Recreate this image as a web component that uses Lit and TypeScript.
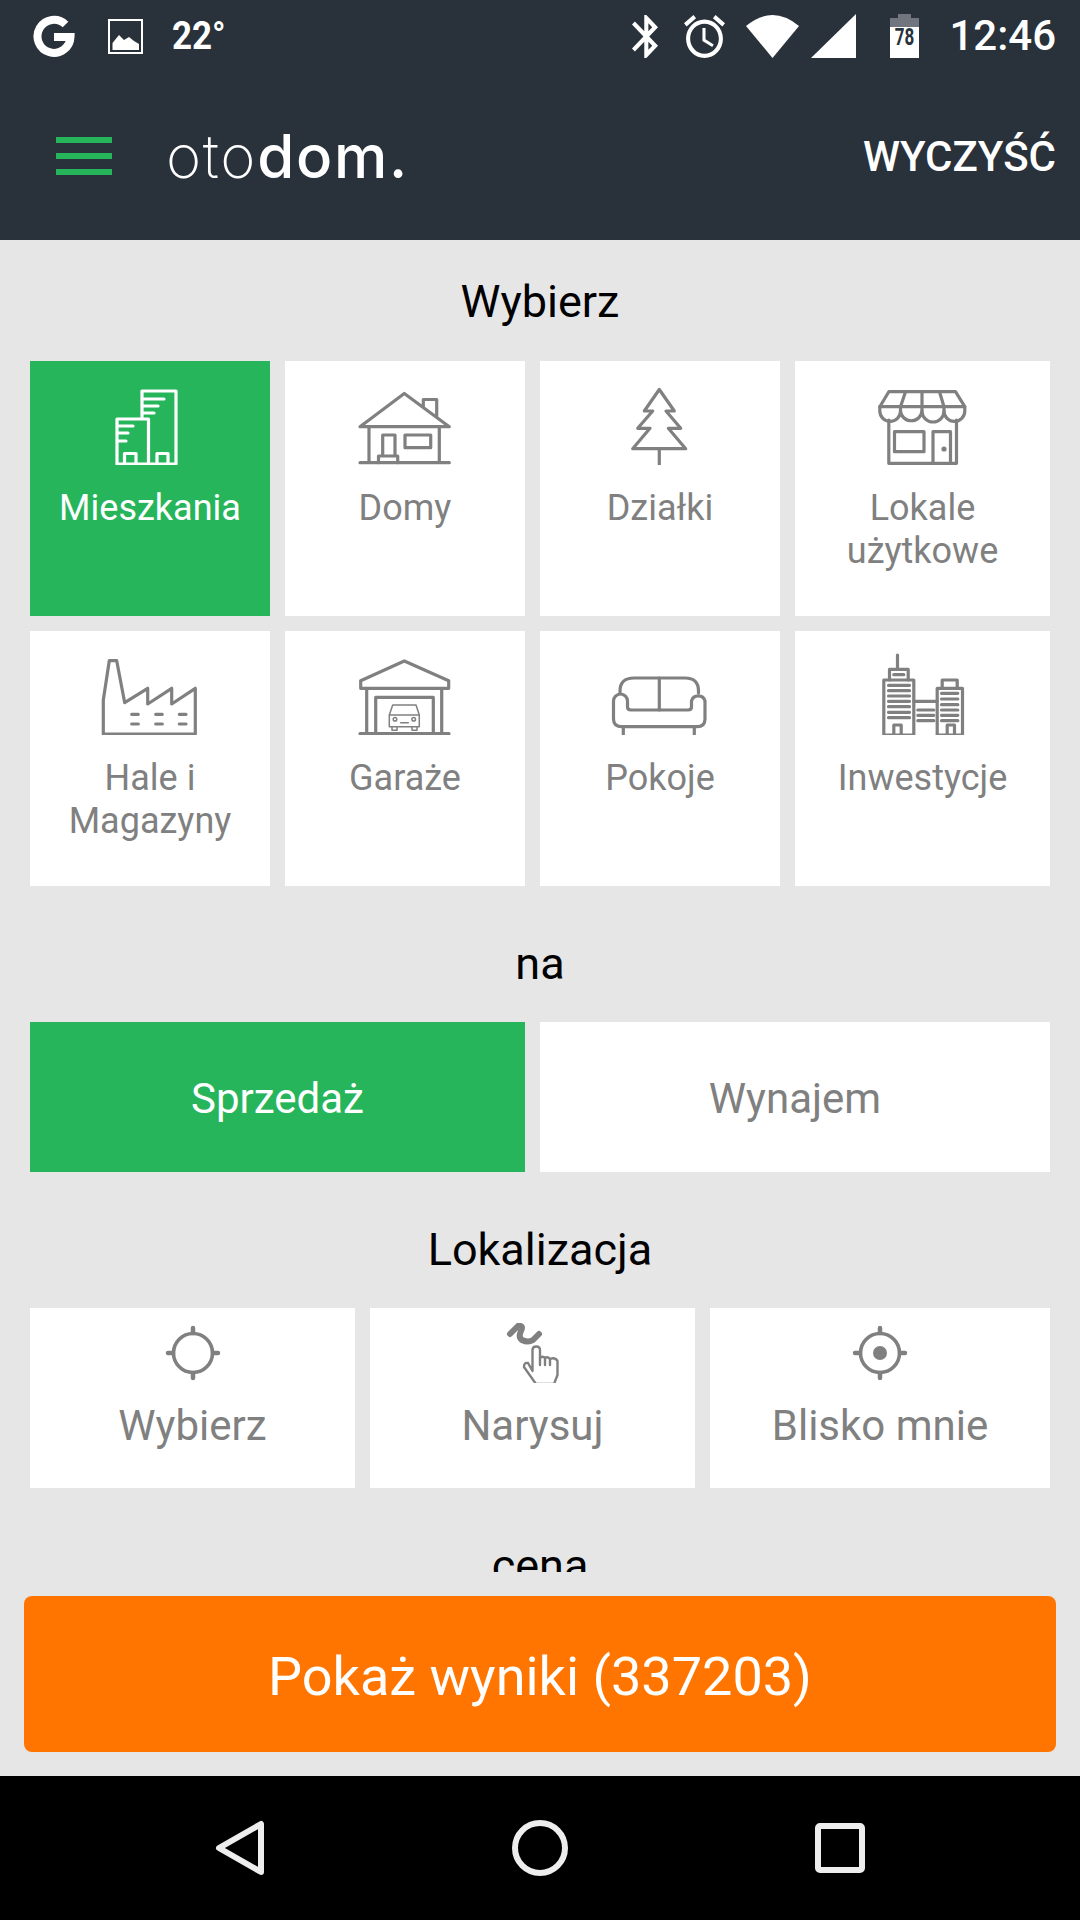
import { LitElement, html, svg, css } from 'lit';
import { customElement } from 'lit/decorators.js';
import { classMap } from 'lit/directives/class-map.js';

// all property icons share a 100x90 box, drawn as 3px outlines
const icons = {
  flats: svg`
    <path d="M42 43V16H76V89H17V44H48.5V89" />
    <path d="M43 24H64M43 31H58M43 38H54M18 51H33M18 58H28M18 66H26" />
    <path d="M24.5 89V78.5H36V89M57 89V78.5H68V89" />`,
  house: svg`
    <path d="M5 51.7L49.3 18.5L94.3 51.7ZM68.3 32V24.5H81.7V41.5" />
    <path d="M14 52V87.7M84.3 52V87.7M5 87.7H94.3" />
    <path d="M27.7 81V60H40V81M23.5 87.7V81H42.7V87.7" />
    <rect x="50" y="60" width="25.7" height="12.7" />`,
  tree: svg`
    <path d="M49.3 14.5L64.3 36H56L70.7 53.3H58.3L75.7 73.7H22.7L40 53.3H27.7L42.7 36H34.3Z" />
    <path d="M49.3 73.7V89.3" />`,
  shop: svg`
    <path d="M15.8 16.7H82.5L91.8 31.7H6.8Z" />
    <path d="M6.8 31.7V36A10.3 10.3 0 0 0 27.5 36A10.8 10.8 0 0 0 49 36A11 11 0 0 0 71 36A10.4 10.4 0 0 0 91.8 36V31.7" />
    <path d="M32.5 16.7L27.5 31.7V36M49 16.7V36M66.5 16.7L71 31.7V36" />
    <path d="M15.8 45V88.3H83.5V45" />
    <rect x="21.5" y="56.7" width="29.5" height="20" />
    <path d="M60 88.3V56.7H77.5V88.3" />
    <circle class="solid" cx="71" cy="74" r="2.6" />`,
  factory: svg`
    <path d="M3.3 89V55L9.3 15.7H16.7L24.7 57.7L47.7 43.3V59L71.7 43.3V59L95.3 43.3V89Z" />
    <path d="M31.7 69.3H38.3M55.7 69.3H62.3M79.3 69.3H86M31.7 79H38.3M55.7 79H62.3M79.3 79H86" />`,
  garage: svg`
    <path d="M49.3 16L5.7 35.7V43.3H93.7V35.7Z" />
    <path d="M11.7 43.3V88.7M86.7 43.3V88.7M5 88.7H94" />
    <path d="M20.7 88.7V52.3H78.3V88.7" />
    <g class="thin">
      <path d="M34.3 81.7V70L37.7 60H61L64.3 70V81.7ZM34.3 70H64.3M45.7 77.7H53.3" />
      <path d="M37 81.7V85.3H42V81.7M57 81.7V85.3H62V81.7" />
      <circle cx="40" cy="74.3" r="1.8" />
      <circle cx="58.7" cy="74.3" r="1.8" />
    </g>`,
  sofa: svg`
    <path d="M10 48V46Q10 33 24 33H75Q88.5 33 88.5 46V48" />
    <path d="M3.5 56A7 7 0 0 1 17.5 56V62Q17.5 65 21 65H78Q81.5 65 81.5 62V56A7 7 0 0 1 95 56V74Q95 81.7 87 81.7H12Q3.5 81.7 3.5 74Z" />
    <path d="M49.3 33V65M13.3 81.7V89.3M84.3 81.7V89.3" />`,
  investment: svg`
    <path d="M24.5 10V24.3M16.5 35V24.3H35.2V35M20.8 29.7H30.8" />
    <rect x="10.8" y="35" width="30" height="55" />
    <path d="M15.5 40.3H36.5M15.5 45.7H36.5M15.5 51H36.5M15.5 56.3H36.5M15.5 61.7H36.5M15.5 67.3H36.5M15.5 72.7H36.5" />
    <path d="M20.8 90V80H28.2V90" />
    <path d="M40.8 56.3H64.2M44.8 65H60.8M44.8 70.3H60.8M44.8 75.7H60.8" />
    <rect x="64.2" y="43.3" width="25.3" height="46.7" />
    <path d="M69.2 43.3V35H84.2V43.3" />
    <path d="M68.5 48.3H84.8M68.5 54H84.8M68.5 59.7H84.8M68.5 65H84.8M68.5 70.3H84.8M68.5 75.7H84.8" />
    <path d="M74.2 90V80H81.5V90" />`,
};

const crosshair = svg`
  <circle cx="30" cy="30" r="19.5" />
  <path class="tick" d="M30 5V10M30 50V55M5 30H10M50 30H55" />`;

const locationIcons = {
  pick: crosshair,
  draw: svg`
    <path class="squiggle" d="M7 11L15 3Q21 2 18 8Q15 14 19 17Q25 20 30 17L36 11" />
    <path class="hand" d="M29.5 48V27Q29.5 23.5 33.2 23.5Q37 23.5 37 27V35Q39.5 32.5 42 35Q44.5 33 47 36Q52 34 54.5 38V52L51 61H33L21 44Q21 39 25 40Z" />
    <path class="hand" d="M37 35V42M42 35V42M47 36V42" />`,
  near: svg`${crosshair}<circle class="solid" cx="30" cy="30" r="7" />`,
};

const propertyTypes = [
  { label: 'Mieszkania', icon: icons.flats, active: true },
  { label: 'Domy', icon: icons.house },
  { label: 'Działki', icon: icons.tree },
  { label: 'Lokale użytkowe', icon: icons.shop },
  { label: 'Hale i Magazyny', icon: icons.factory },
  { label: 'Garaże', icon: icons.garage },
  { label: 'Pokoje', icon: icons.sofa },
  { label: 'Inwestycje', icon: icons.investment },
];

const locations = [
  { label: 'Wybierz', icon: locationIcons.pick },
  { label: 'Narysuj', icon: locationIcons.draw },
  { label: 'Blisko mnie', icon: locationIcons.near },
];

@customElement('app-root')
export class AppRoot extends LitElement {
  static styles = css`
    :host {
      display: flex;
      flex-direction: column;
      width: 1080px;
      height: 1920px;
      overflow: hidden;
      background: #e6e6e6;
      font-family: Roboto, "Noto Sans", sans-serif;
    }

    header {
      flex: none;
      height: 240px;
      background: #29313a;
      color: #fff;
    }

    .status {
      display: flex;
      justify-content: space-between;
      align-items: center;
      height: 72px;
      padding: 0 24px 0 33px;
    }

    .status-left,
    .status-right {
      display: flex;
      align-items: center;
    }

    .status svg {
      display: block;
      fill: #fff;
    }

    .google {
      fill: none !important;
      stroke: #fff;
      stroke-width: 8;
      margin-right: 33px;
    }

    .picture {
      margin-right: 29px;
    }

    .temp {
      display: inline-block;
      font-weight: 700;
      font-size: 38px;
      transform: scaleX(0.92);
      transform-origin: left center;
    }

    .bluetooth { margin-right: 26px; }
    .alarm { margin-right: 21px; }
    .wifi { margin-right: 12px; }
    .signal { margin-right: 34px; }
    .battery { margin-right: 30px; }

    .battery text {
      font-weight: 700;
      font-size: 23px;
      fill: #29313a;
    }

    .clock {
      font-size: 42px;
      font-weight: 500;
      line-height: 1;
    }

    .toolbar {
      display: flex;
      align-items: center;
      height: 168px;
      padding: 0 24px 0 56px;
    }

    .burger {
      display: flex;
      flex-direction: column;
      gap: 10px;
      width: 56px;
      margin-right: 54px;
    }

    .burger span {
      height: 6px;
      background: #27b55c;
    }

    .logo {
      font-family: Inter, sans-serif;
      font-size: 60px;
      line-height: 1;
      letter-spacing: 1.7px;
    }

    .logo .thin-part {
      font-weight: 200;
    }

    .logo .bold-part {
      font-weight: 500;
    }

    .clear {
      margin-left: auto;
      font-size: 42px;
      font-weight: 500;
    }

    .scroll {
      flex: none;
      height: 1332px;
      overflow: hidden;
      padding: 0 30px;
      box-sizing: border-box;
    }

    .title {
      margin: 53px 0 33px;
      font-size: 45px;
      font-weight: 400;
      line-height: 50px;
      text-align: center;
      color: #000;
    }

    .title.first {
      margin-top: 37px;
      margin-bottom: 34px;
    }

    .types {
      display: grid;
      grid-template-columns: 240px 240px 240px 1fr;
      grid-auto-rows: 255px;
      gap: 15px;
    }

    .card {
      background: #fff;
      color: #808080;
      text-align: center;
    }

    .card.active {
      background: #27b55c;
      color: #fff;
    }

    .card svg {
      display: block;
      margin: 0 auto;
      fill: none;
      stroke: currentColor;
      stroke-width: 3.2;
      stroke-linejoin: round;
      stroke-linecap: round;
    }

    .card svg .solid {
      fill: currentColor;
      stroke: none;
    }

    .card svg .thin {
      stroke-width: 1.5;
    }

    .type {
      padding-top: 14px;
      font-size: 36px;
      line-height: 43px;
    }

    .type svg {
      margin-bottom: 22px;
    }

    .type-label {
      padding: 0 20px;
    }

    .deal {
      display: grid;
      grid-template-columns: 495px 1fr;
      gap: 15px;
    }

    .deal .card {
      height: 150px;
      padding-top: 4px;
      box-sizing: border-box;
      font-size: 42px;
      line-height: 146px;
    }

    .where {
      display: grid;
      grid-template-columns: 325px 325px 1fr;
      gap: 15px;
    }

    .where .card {
      height: 180px;
      padding-top: 15px;
      box-sizing: border-box;
      font-size: 42px;
      line-height: 50px;
    }

    .where svg {
      stroke-width: 3.6;
      margin-bottom: 18px;
    }

    .where svg .tick {
      stroke-width: 4.5;
    }

    .where svg .squiggle {
      stroke-width: 6;
    }

    .where svg .hand {
      stroke-width: 2.4;
    }

    .footer {
      flex: none;
      padding: 24px;
    }

    .show {
      display: block;
      width: 100%;
      height: 156px;
      border: none;
      border-radius: 8px;
      background: #ff7500;
      color: #fff;
      font-family: inherit;
      font-size: 54px;
      padding: 4px 0 0;
    }

    nav {
      flex: 1;
      display: flex;
      align-items: center;
      background: #000;
      padding-left: 215px;
    }

    nav svg {
      display: block;
      fill: none;
      stroke: #eee;
      stroke-width: 6;
      stroke-linejoin: round;
    }

    .nav-back { margin-right: 247px; }
    .nav-home { margin-right: 247px; }
  `;

  private _renderStatus() {
    return html`
      <div class="status">
        <div class="status-left">
          <svg class="google" width="42" height="42" viewBox="0 0 42 42">
            <path d="M32.5 9.5A16.5 16.5 0 1 0 37.5 22H21" />
          </svg>
          <svg class="picture" width="35" height="35" viewBox="0 0 35 35">
            <path fill-rule="evenodd" d="M0 0H35V35H0ZM2 2V33H33V2Z" />
            <path d="M4.5 31V24L11 16L16 21L21 18L26 22L31 25V31Z" />
          </svg>
          <span class="temp">22°</span>
        </div>
        <div class="status-right">
          <svg class="bluetooth" width="26" height="43" viewBox="5 2 12.71 20" preserveAspectRatio="none">
            <path d="M17.71 7.71L12 2h-1v7.59L6.41 5 5 6.41 10.59 12 5 17.59 6.41 19 11 14.41V22h1l5.71-5.71-4.3-4.29 4.3-4.29zM13 5.83l1.88 1.88L13 9.59V5.83zm1.88 10.46L13 18.17v-3.76l1.88 1.88z" />
          </svg>
          <svg class="alarm" width="41" height="43" viewBox="2 1.86 20 20.14" preserveAspectRatio="none">
            <path d="M22 5.72l-4.6-3.86-1.29 1.53 4.6 3.86L22 5.72zM7.88 3.39L6.6 1.86 2 5.71l1.29 1.53 4.59-3.85zM12.5 8H11v6l4.75 2.85.75-1.23-4-2.37V8zM12 4c-4.97 0-9 4.03-9 9s4.03 9 9 9 9-4.03 9-9-4.03-9-9-9zm0 16c-3.87 0-7-3.13-7-7s3.13-7 7-7 7 3.13 7 7-3.13 7-7 7z" />
          </svg>
          <svg class="wifi" width="53" height="43" viewBox="0 0 53 43">
            <path d="M0 11Q26.5 -11 53 11L26.5 43Z" />
          </svg>
          <svg class="signal" width="45" height="44" viewBox="0 0 45 44">
            <path d="M45 0V44H0Z" />
          </svg>
          <svg class="battery" width="29" height="44" viewBox="0 0 29 44">
            <path fill="#70757e" d="M8 0H21V4H29V13H0V4H8Z" />
            <path d="M0 13H29V44H0Z" />
            <text transform="translate(14.5 31) scale(0.74 1)" text-anchor="middle">78</text>
          </svg>
          <span class="clock">12:46</span>
        </div>
      </div>
    `;
  }

  private _renderHeader() {
    return html`
      <header>
        ${this._renderStatus()}
        <div class="toolbar">
          <div class="burger"><span></span><span></span><span></span></div>
          <div class="logo"><span class="thin-part">oto</span><span class="bold-part">dom.</span></div>
          <div class="clear">WYCZYŚĆ</div>
        </div>
      </header>
    `;
  }

  private _renderTypes() {
    return html`
      <div class="types">
        ${propertyTypes.map((type) => html`
          <div class=${classMap({ card: true, type: true, active: !!type.active })}>
            <svg width="100" height="90" viewBox="0 0 100 90">${type.icon}</svg>
            <div class="type-label">${type.label}</div>
          </div>
        `)}
      </div>
    `;
  }

  render() {
    return html`
      ${this._renderHeader()}
      <div class="scroll">
        <div class="title first">Wybierz</div>
        ${this._renderTypes()}
        <div class="title">na</div>
        <div class="deal">
          <div class="card active">Sprzedaż</div>
          <div class="card">Wynajem</div>
        </div>
        <div class="title">Lokalizacja</div>
        <div class="where">
          ${locations.map((item) => html`
            <div class="card">
              <svg width="60" height="60" viewBox="0 0 60 60">${item.icon}</svg>
              <div>${item.label}</div>
            </div>
          `)}
        </div>
        <div class="title">cena</div>
      </div>
      <div class="footer">
        <button class="show">Pokaż wyniki (337203)</button>
      </div>
      <nav>
        <svg class="nav-back" width="50" height="56" viewBox="0 0 50 56">
          <path d="M46 4V52L4 28Z" />
        </svg>
        <svg class="nav-home" width="56" height="56" viewBox="0 0 56 56">
          <circle cx="28" cy="28" r="25" />
        </svg>
        <svg width="50" height="50" viewBox="0 0 50 50">
          <rect x="3" y="3" width="44" height="44" rx="2" />
        </svg>
      </nav>
    `;
  }
}

declare global {
  interface HTMLElementTagNameMap {
    'app-root': AppRoot;
  }
}
